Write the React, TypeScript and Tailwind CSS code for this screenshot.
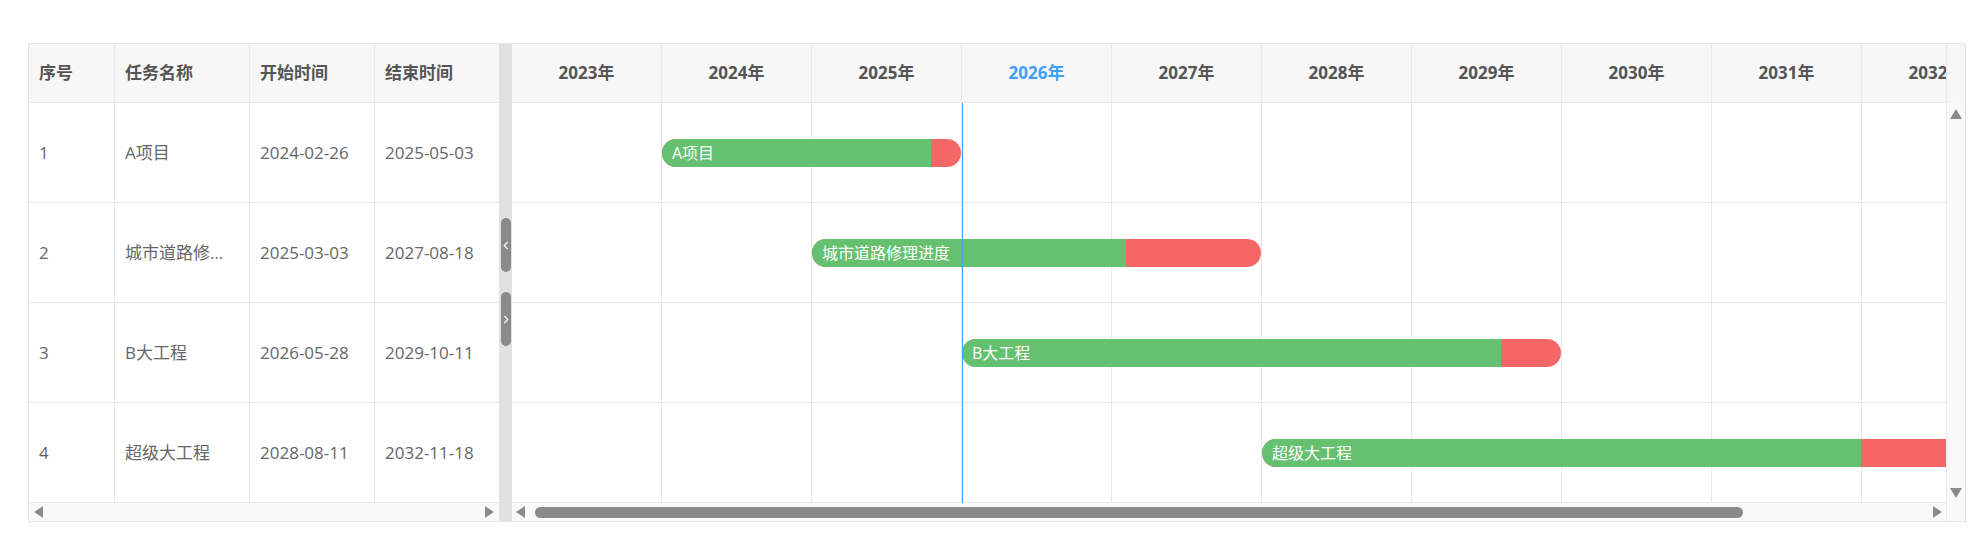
import React from 'react';

interface Task {
  id: number;
  name: string;
  start: string;
  end: string;
  startIdx: number;
  years: number;
  progress: number;
}

const YEARS = [2023, 2024, 2025, 2026, 2027, 2028, 2029, 2030, 2031, 2032];
const CURRENT_YEAR = 2026;
const YEAR_W = 150;

const tasks: Task[] = [
  { id: 1, name: 'A项目', start: '2024-02-26', end: '2025-05-03', startIdx: 1, years: 2, progress: 0.9 },
  { id: 2, name: '城市道路修理进度', start: '2025-03-03', end: '2027-08-18', startIdx: 2, years: 3, progress: 0.7 },
  { id: 3, name: 'B大工程', start: '2026-05-28', end: '2029-10-11', startIdx: 3, years: 4, progress: 0.9 },
  { id: 4, name: '超级大工程', start: '2028-08-11', end: '2032-11-18', startIdx: 5, years: 5, progress: 0.8 },
];

function Arrow({ dir }: { dir: 'left' | 'right' | 'up' | 'down' }) {
  if (dir === 'up' || dir === 'down') {
    return (
      <svg viewBox="0 0 12 10" className="w-[12px] h-[10px]">
        <polygon points={dir === 'up' ? '6,0 12,10 0,10' : '0,0 12,0 6,10'} fill="#8a8a8a" />
      </svg>
    );
  }
  return (
    <svg viewBox="0 0 9 12" className="w-[9px] h-[12px]">
      <polygon points={dir === 'left' ? '9,0 9,12 0,6' : '0,0 0,12 9,6'} fill="#8a8a8a" />
    </svg>
  );
}

function Splitter() {
  return (
    <div className="w-[13px] shrink-0 bg-[#e1e1e1] flex flex-col items-center pt-[174px] gap-[20px]">
      <div className="w-[10px] h-[54px] rounded-[5px] bg-[#8a8a8a] flex items-center justify-center">
        <svg viewBox="0 0 6 10" className="w-[6px] h-[9px]">
          <polyline points="5,1 1,5 5,9" fill="none" stroke="#fff" strokeWidth={1.4} />
        </svg>
      </div>
      <div className="w-[10px] h-[54px] rounded-[5px] bg-[#8a8a8a] flex items-center justify-center">
        <svg viewBox="0 0 6 10" className="w-[6px] h-[9px]">
          <polyline points="1,1 5,5 1,9" fill="none" stroke="#fff" strokeWidth={1.4} />
        </svg>
      </div>
    </div>
  );
}

function TaskTable() {
  const cols = [
    { title: '序号', w: 'w-[86px] border-r' },
    { title: '任务名称', w: 'w-[135px] border-r' },
    { title: '开始时间', w: 'w-[125px] border-r' },
    { title: '结束时间', w: 'w-[124px]' },
  ];
  return (
    <div className="w-[470px] shrink-0 flex flex-col">
      {/* Header */}
      <div className="flex h-[59px] border-b border-[#e8e8e8] bg-[#f7f7f7]">
        {cols.map((c) => (
          <div
            key={c.title}
            className={`${c.w} border-[#e8e8e8] h-full flex items-center px-[10px] font-bold text-[#555]`}
          >
            {c.title}
          </div>
        ))}
      </div>

      {/* Rows */}
      {tasks.map((t) => (
        <div key={t.id} className="flex h-[100px] border-b border-[#e8e8e8] text-[#666]">
          <div className="w-[86px] border-r border-[#e8e8e8] flex items-center px-[10px]">{t.id}</div>
          <div className="w-[135px] border-r border-[#e8e8e8] flex items-center px-[10px] min-w-0">
            <span className="truncate">{t.name}</span>
          </div>
          <div className="w-[125px] border-r border-[#e8e8e8] flex items-center px-[10px]">{t.start}</div>
          <div className="w-[124px] flex items-center px-[10px]">{t.end}</div>
        </div>
      ))}

      {/* Horizontal scrollbar */}
      <div className="h-[18px] bg-[#fafafa] flex items-center justify-between pl-[5px] pr-[5px]">
        <Arrow dir="left" />
        <Arrow dir="right" />
      </div>
    </div>
  );
}

function yearClass(y: number) {
  return y === CURRENT_YEAR
    ? 'w-[150px] shrink-0 h-full border-r border-[#e8e8e8] flex items-center justify-center font-bold text-[#409eff] whitespace-nowrap'
    : 'w-[150px] shrink-0 h-full border-r border-[#e8e8e8] flex items-center justify-center font-bold text-[#555] whitespace-nowrap';
}

function Gantt() {
  const todayOffset = (CURRENT_YEAR - YEARS[0]) * YEAR_W;
  return (
    <div className="flex-1 flex flex-col min-w-0">
      {/* Year header */}
      <div className="flex h-[59px]">
        <div className="w-[1434px] overflow-hidden flex border-b border-[#e8e8e8] bg-[#f7f7f7]">
          {YEARS.map((y) => (
            <div key={y} className={yearClass(y)}>
              {y}年
            </div>
          ))}
        </div>
        <div className="w-[19px] shrink-0 bg-[#f7f7f7] border-l border-[#e8e8e8]" />
      </div>

      {/* Body */}
      <div className="flex">
        <div className="w-[1434px] overflow-hidden relative">
          {tasks.map((t) => {
            const width = t.years * YEAR_W - 1;
            return (
              <div key={t.id} className="relative flex h-[100px] border-b border-[#e8e8e8]">
                {YEARS.map((y) => (
                  <div key={y} className="w-[150px] shrink-0 h-full border-r border-[#e8e8e8]" />
                ))}
                <div
                  className="absolute top-[36px] h-[28px] rounded-full overflow-hidden flex bg-[#f56767]"
                  style={{ left: t.startIdx * YEAR_W, width }}
                >
                  <div
                    className="h-full bg-[#65c16f] flex items-center pl-[10px] text-white text-[16px] whitespace-nowrap"
                    style={{ width: width * t.progress }}
                  >
                    {t.name}
                  </div>
                </div>
              </div>
            );
          })}
          {/* today line */}
          <div className="absolute top-0 bottom-0 w-px bg-[#409eff]" style={{ left: todayOffset }} />
        </div>

        {/* Vertical scrollbar */}
        <div className="w-[19px] shrink-0 bg-[#fafafa] border-l border-[#e8e8e8] flex flex-col items-center justify-between pt-[6px] pb-[5px]">
          <Arrow dir="up" />
          <Arrow dir="down" />
        </div>
      </div>

      {/* Horizontal scrollbar */}
      <div className="flex h-[18px]">
        <div className="w-[1434px] bg-[#fafafa] flex items-center pl-[4px] pr-[4px]">
          <Arrow dir="left" />
          <div className="ml-[10px] w-[1208px] h-[11px] rounded-full bg-[#8a8a8a]" />
          <div className="flex-1" />
          <Arrow dir="right" />
        </div>
        <div className="w-[19px] shrink-0 bg-[#fafafa] border-l border-[#e8e8e8]" />
      </div>
    </div>
  );
}

export default function App() {
  return (
    <div className="min-h-screen bg-white pt-[43px] pl-[28px] font-['Open_Sans','Noto_Sans_CJK_SC',sans-serif] text-[17px]">
      <div className="w-[1938px] border border-[#e5e5e5] flex">
        <TaskTable />
        <Splitter />
        <Gantt />
      </div>
    </div>
  );
}
